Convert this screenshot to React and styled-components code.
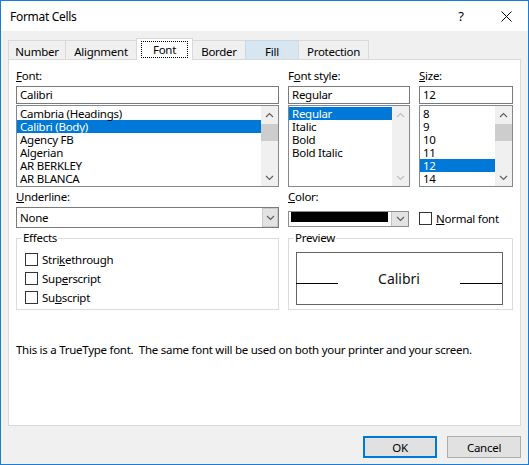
import React from 'react';
import styled, { createGlobalStyle, css } from 'styled-components';

const Global = createGlobalStyle`
  html, body { margin: 0; padding: 0; background: #fff; }
  body {
    font-family: 'Noto Sans', 'Liberation Sans', sans-serif;
    font-size: 11.5px;
    letter-spacing: -0.27px;
    color: #000;
  }
  * { box-sizing: border-box; }
`;

const Window = styled.div`
  width: 529px;
  height: 465px;
  border: 1px solid #1c7cd5;
  background: #f0f0f0;
  display: flex;
  flex-direction: column;
  overflow: hidden;
`;

const TitleBar = styled.div`
  height: 30px;
  flex-shrink: 0;
  background: #fff;
  display: flex;
  align-items: center;
  padding-left: 9px;
`;

const Title = styled.div`
  flex: 1;
  font-size: 12px;
  letter-spacing: -0.3px;
`;

const CaptionButton = styled.div`
  width: ${p => p.$w}px;
  height: 30px;
  display: flex;
  align-items: center;
  justify-content: center;
  font-size: 13px;
`;

const Body = styled.div`
  flex: 1;
  display: flex;
  flex-direction: column;
  padding: 7px 7px 6px 7px;
`;

const TabStrip = styled.div`
  height: 21px;
  display: flex;
  align-items: flex-end;
`;

const Tab = styled.div`
  width: ${p => p.$w}px;
  margin-left: ${p => (p.$first ? 0 : -1)}px;
  height: 19px;
  border: 1px solid #d9d9d9;
  border-bottom: none;
  background: #f0f0f0;
  display: flex;
  justify-content: center;
  padding-top: 3px;
  line-height: 15px;
  ${p => p.$hover && css`
    background: #d8e6f2;
    border-color: #c6d9eb;
  `}
  ${p => p.$active && css`
    height: 22px;
    margin-bottom: -1px;
    background: #fff;
    position: relative;
    z-index: 2;
    padding-top: 2px;
  `}
`;

const FocusBox = styled.div`
  width: 47px;
  height: 17px;
  border: 1px dotted #000;
  display: flex;
  align-items: center;
  justify-content: center;
  line-height: 15px;
`;

const Panel = styled.div`
  height: 367px;
  background: #fff;
  border: 1px solid #d9d9d9;
  padding: 8px 7px 0 7px;
`;

const Grid = styled.div`
  display: grid;
  grid-template-columns: 263px 122px 1fr;
  column-gap: 9px;
`;

const Field = styled.div`
  display: flex;
  flex-direction: column;
`;

const Label = styled.div`
  height: 16px;
  line-height: 16px;
  margin: ${p => p.$m || '0 0 2px 0'};
  white-space: nowrap;
`;

const Key = styled.span`
  text-decoration: underline;
  text-underline-offset: 1px;
`;

const TextBox = styled.div`
  height: 18px;
  border: 1px solid #7a7a7a;
  background: #fff;
  padding-left: 3px;
  line-height: 16px;
`;

const ListBox = styled.div`
  margin-top: 1px;
  height: 82px;
  border: 1px solid #828790;
  background: #fff;
  display: flex;
`;

const ListItems = styled.div`
  flex: 1;
  padding-top: 1px;
  overflow: hidden;
`;

const ListItem = styled.div`
  height: 13px;
  line-height: 13px;
  padding-left: 3px;
  white-space: nowrap;
  ${p => p.$sel && css`
    background: #0078d7;
    color: #fff;
  `}
`;

const Scrollbar = styled.div`
  width: 17px;
  background: #f0f0f0;
  display: flex;
  flex-direction: column;
`;

const ScrollArrow = styled.div`
  height: 17px;
  display: flex;
  align-items: center;
  justify-content: center;
`;

const ScrollTrack = styled.div`
  flex: 1;
  padding-top: 1px;
`;

const Thumb = styled.div`
  height: 17px;
  background: #cdcdcd;
`;

const Dropdown = styled.div`
  height: 21px;
  border: 1px solid #7a7a7a;
  background: #fff;
  display: flex;
`;

const DropValue = styled.div`
  flex: 1;
  padding-left: 3px;
  line-height: 19px;
`;

const DropButton = styled.div`
  width: 16px;
  background: #e3e3e3;
  border: 1px solid #cbcbcb;
  display: flex;
  align-items: center;
  justify-content: center;
`;

const ColorBox = styled.div`
  align-self: end;
  margin-bottom: 1px;
  height: 16px;
  width: 121px;
  border: 1px solid #8c8c8c;
  background: #fff;
  display: flex;
`;

const Swatch = styled.div`
  flex: 1;
  height: 10px;
  margin: 0 3px 0 2px;
  background: #000;
`;

const ColorDrop = styled.div`
  width: 17px;
  background: #e3e3e3;
  border-left: 1px solid #c4c4c4;
  display: flex;
  align-items: center;
  justify-content: center;
`;

const CheckRow = styled.label`
  display: flex;
  align-items: center;
  gap: 4px;
  height: ${p => p.$h || 19}px;
  padding-top: ${p => p.$pt || 0}px;
  margin-left: ${p => p.$ml || 0}px;
  white-space: nowrap;
`;

const Box = styled.span`
  width: 13px;
  height: 13px;
  border: 1px solid #333;
  background: #fff;
  flex-shrink: 0;
`;

const Group = styled.fieldset`
  margin: 2px 0 0 0;
  min-width: 0;
  border: 1px solid #dcdcdc;
  padding: 4px 5px 2px 5px;
  ${p => p.$span && css`grid-column: 2 / span 2;`}
`;

const Legend = styled.legend`
  padding: 0 1px;
  line-height: 16px;
  height: 16px;
`;

const PreviewBox = styled.div`
  margin: 2px 0 0 2px;
  width: 207px;
  height: 53px;
  border: 1px solid #646464;
  display: flex;
  align-items: center;
`;

const PreviewRow = styled.div`
  flex: 1;
  display: flex;
  align-items: baseline;
  justify-content: space-between;
  margin-left: -1px;
`;

const PreviewLine = styled.div`
  width: ${p => p.$w}px;
  height: 1px;
  background: #000;
`;

const PreviewText = styled.div`
  font-family: 'Noto Sans', 'Open Sans', sans-serif;
  font-size: 14px;
  letter-spacing: 0;
  line-height: 20px;
  color: #111;
`;

const Info = styled.div`
  grid-column: 1 / span 3;
  margin-top: 32px;
  line-height: 16px;
  white-space: pre;
`;

const Footer = styled.div`
  margin-top: 10px;
  display: flex;
  justify-content: flex-end;
  gap: 10px;
`;

const Button = styled.div`
  width: 74px;
  height: 22px;
  background: #e1e1e1;
  border: 1px solid #adadad;
  display: flex;
  align-items: center;
  justify-content: center;
  ${p => p.$default && css`
    border-color: #0078d7;
    box-shadow: inset 0 0 0 1px #0078d7;
  `}
`;

const Chevron = ({ up, color = '#606060' }) => (
  <svg width="9" height="6" viewBox="0 0 9 6">
    <path
      d={up ? 'M1 5 L4.5 1.5 L8 5' : 'M1 1 L4.5 4.5 L8 1'}
      fill="none"
      stroke={color}
      strokeWidth="1.2"
    />
  </svg>
);

const ScrollBar = ({ disabled, thumb }) => {
  const c = disabled ? '#c0c0c0' : '#606060';
  return (
    <Scrollbar>
      <ScrollArrow><Chevron up color={c} /></ScrollArrow>
      <ScrollTrack>{thumb && <Thumb />}</ScrollTrack>
      <ScrollArrow><Chevron color={c} /></ScrollArrow>
    </Scrollbar>
  );
};

const tabs = [
  { label: 'Number', w: 58 },
  { label: 'Alignment', w: 72 },
  { label: 'Font', w: 57, active: true },
  { label: 'Border', w: 54 },
  { label: 'Fill', w: 54, hover: true },
  { label: 'Protection', w: 71 },
];

const fonts = ['Cambria (Headings)', 'Calibri (Body)', 'Agency FB', 'Algerian', 'AR BERKLEY', 'AR BLANCA'];
const styles = ['Regular', 'Italic', 'Bold', 'Bold Italic'];
const sizes = ['8', '9', '10', '11', '12', '14'];

export default function App() {
  return (
    <>
      <Global />
      <Window>
        <TitleBar>
          <Title>Format Cells</Title>
          <CaptionButton $w={46}>?</CaptionButton>
          <CaptionButton $w={44}>
            <svg width="11" height="11" viewBox="0 0 11 11">
              <path d="M0.5 0.5 L10.5 10.5 M10.5 0.5 L0.5 10.5" stroke="#000" strokeWidth="1" />
            </svg>
          </CaptionButton>
        </TitleBar>
        <Body>
          <TabStrip>
            {tabs.map((t, i) => (
              <Tab key={t.label} $w={t.w} $first={i === 0} $active={t.active} $hover={t.hover}>
                {t.active ? <FocusBox>{t.label}</FocusBox> : t.label}
              </Tab>
            ))}
          </TabStrip>
          <Panel>
            <Grid>
              <Field>
                <Label><Key>F</Key>ont:</Label>
                <TextBox>Calibri</TextBox>
                <ListBox>
                  <ListItems>
                    {fonts.map(f => (
                      <ListItem key={f} $sel={f === 'Calibri (Body)'}>{f}</ListItem>
                    ))}
                  </ListItems>
                  <ScrollBar thumb />
                </ListBox>
              </Field>
              <Field>
                <Label>F<Key>o</Key>nt style:</Label>
                <TextBox>Regular</TextBox>
                <ListBox>
                  <ListItems>
                    {styles.map(s => (
                      <ListItem key={s} $sel={s === 'Regular'}>{s}</ListItem>
                    ))}
                  </ListItems>
                  <ScrollBar disabled />
                </ListBox>
              </Field>
              <Field>
                <Label><Key>S</Key>ize:</Label>
                <TextBox>12</TextBox>
                <ListBox>
                  <ListItems>
                    {sizes.map(s => (
                      <ListItem key={s} $sel={s === '12'}>{s}</ListItem>
                    ))}
                  </ListItems>
                  <ScrollBar thumb />
                </ListBox>
              </Field>

              <Label $m="2px 0 2px 0"><Key>U</Key>nderline:</Label>
              <Label $m="2px 0 2px 0"><Key>C</Key>olor:</Label>
              <div />

              <Dropdown>
                <DropValue>None</DropValue>
                <DropButton><Chevron /></DropButton>
              </Dropdown>
              <ColorBox>
                <Swatch />
                <ColorDrop><Chevron /></ColorDrop>
              </ColorBox>
              <CheckRow $h={21} $pt={1}>
                <Box />
                <span><Key>N</Key>ormal font</span>
              </CheckRow>

              <Group>
                <Legend>Effects</Legend>
                <CheckRow $ml={3}><Box /><span>Stri<Key>k</Key>ethrough</span></CheckRow>
                <CheckRow $ml={3}><Box /><span>Sup<Key>e</Key>rscript</span></CheckRow>
                <CheckRow $ml={3}><Box /><span>Su<Key>b</Key>script</span></CheckRow>
              </Group>
              <Group $span>
                <Legend>Preview</Legend>
                <PreviewBox>
                  <PreviewRow>
                    <PreviewLine $w={42} />
                    <PreviewText>Calibri</PreviewText>
                    <PreviewLine $w={42} />
                  </PreviewRow>
                </PreviewBox>
              </Group>

              <Info>This is a TrueType font.  The same font will be used on both your printer and your screen.</Info>
            </Grid>
          </Panel>
          <Footer>
            <Button $default>OK</Button>
            <Button>Cancel</Button>
          </Footer>
        </Body>
      </Window>
    </>
  );
}
